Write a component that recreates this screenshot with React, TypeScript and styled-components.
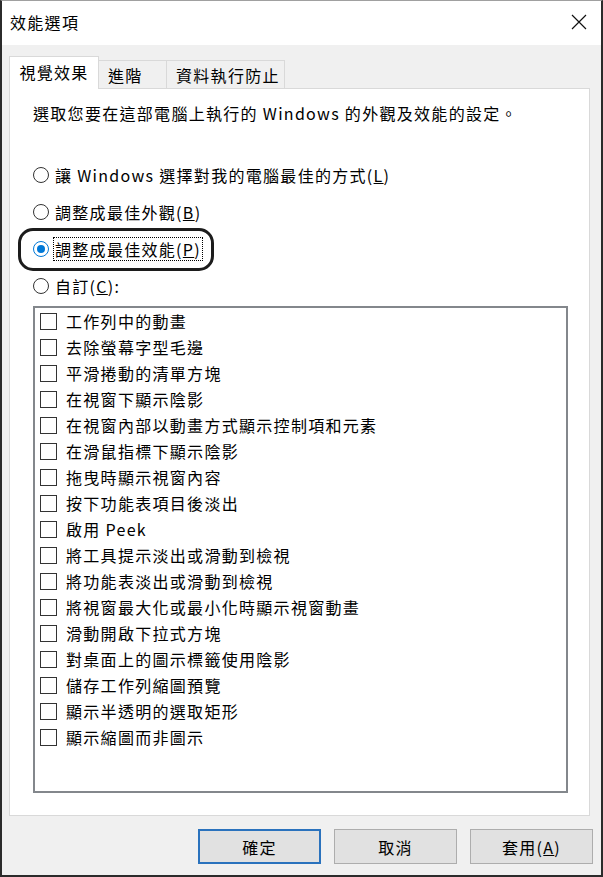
import React from "react";
import styled, { createGlobalStyle } from "styled-components";

const FONT = `"Noto Sans CJK TC", "Noto Sans CJK SC", "Noto Sans", sans-serif`;

const Global = createGlobalStyle`
  html, body { margin: 0; padding: 0; background: #ffffff; }
  body { font-family: ${FONT}; }
`;

const Window = styled.div`
  width: 603px;
  height: 877px;
  box-sizing: border-box;
  border: 2px solid #2b2b2b;
  border-top: 1px solid #a0a0a0;
  display: flex;
  flex-direction: column;
  background: #f0f0f0;
  font-family: ${FONT};
  font-size: 16px;
  letter-spacing: 1.3px;
  color: #000;
`;

const TitleBar = styled.div`
  height: 44px;
  flex: none;
  background: #ffffff;
  display: flex;
  align-items: center;
  justify-content: space-between;
  padding: 0 12px 0 8px;
`;

const Title = styled.span`
  font-size: 16px;
  line-height: 20px;
  margin-top: -2px;
`;

const CloseButton = styled.div`
  width: 20px;
  height: 20px;
  display: flex;
  align-items: center;
  justify-content: center;
  margin-top: -2px;
`;

const Body = styled.div`
  flex: 1;
  display: flex;
  flex-direction: column;
  padding: 11px 10px 11px 7px;
  min-height: 0;
`;

const TabStrip = styled.div`
  display: flex;
  align-items: flex-end;
  height: 33px;
  margin-bottom: -1px;
  position: relative;
  z-index: 1;
`;

const Tab = styled.div<{ $active?: boolean; $w: number }>`
  box-sizing: border-box;
  width: ${(p) => p.$w}px;
  height: ${(p) => (p.$active ? 33 : 29)}px;
  display: flex;
  align-items: center;
  justify-content: ${(p) => (p.$active ? "center" : "flex-start")};
  padding: ${(p) => (p.$active ? "0 0 2px 0" : "0 0 0 9px")};
  background: ${(p) => (p.$active ? "#ffffff" : "#f0f0f0")};
  border: 1px solid #d9d9d9;
  border-left: ${(p) => (p.$active ? "1px solid #d9d9d9" : "none")};
  border-bottom: ${(p) => (p.$active ? "none" : "1px solid #d9d9d9")};
  white-space: nowrap;
`;

const Panel = styled.div`
  flex: 1;
  background: #ffffff;
  border: 1px solid #d9d9d9;
  padding: 12px 21px 0 23px;
  display: flex;
  flex-direction: column;
  margin-right: 1px;
`;

const Description = styled.div`
  line-height: 24px;
  white-space: nowrap;
`;

const RadioGroup = styled.div`
  display: flex;
  flex-direction: column;
  margin-top: 31px;
`;

const RadioRow = styled.div<{ $ring?: boolean }>`
  height: 37px;
  display: flex;
  align-items: center;
  position: relative;
  ${(p) =>
    p.$ring
      ? `
    &::before {
      content: "";
      position: absolute;
      left: -15px;
      top: -2px;
      width: 196px;
      height: 43px;
      box-sizing: border-box;
      border: 3px solid #1c1c1c;
      border-radius: 15px;
      pointer-events: none;
    }
  `
      : ""}
`;

const RadioCircle = styled.span<{ $checked?: boolean }>`
  width: 16px;
  height: 16px;
  box-sizing: border-box;
  border-radius: 50%;
  border: 1px solid ${(p) => (p.$checked ? "#0078d7" : "#333333")};
  background: #ffffff;
  display: flex;
  align-items: center;
  justify-content: center;
  margin-right: 4px;
  flex: none;
  &::after {
    content: "";
    display: ${(p) => (p.$checked ? "block" : "none")};
    width: 8px;
    height: 8px;
    border-radius: 50%;
    background: #0078d7;
  }
`;

const RadioLabel = styled.span<{ $focus?: boolean }>`
  padding: 0 1px;
  line-height: 22px;
  border: 1px dotted ${(p) => (p.$focus ? "#000000" : "transparent")};
  white-space: nowrap;
`;

const ListBox = styled.div`
  margin-top: 2px;
  height: 487px;
  box-sizing: border-box;
  border: 2px solid #83878c;
  background: #ffffff;
  padding: 0 5px;
  display: flex;
  flex-direction: column;
`;

const CheckRow = styled.div`
  height: 26px;
  flex: none;
  display: flex;
  align-items: center;
  white-space: nowrap;
`;

const CheckBox = styled.span`
  width: 17px;
  height: 17px;
  box-sizing: border-box;
  border: 1px solid #333333;
  background: #ffffff;
  margin-right: 9px;
  flex: none;
`;

const ButtonRow = styled.div`
  display: flex;
  justify-content: flex-end;
  gap: 13px;
  margin-top: 13px;
  margin-right: -2px;
`;

const Button = styled.div<{ $default?: boolean }>`
  width: 123px;
  height: 35px;
  box-sizing: border-box;
  background: #e1e1e1;
  border: ${(p) => (p.$default ? "2px solid #2a72bd" : "1px solid #adadad")};
  display: flex;
  align-items: center;
  justify-content: center;
  line-height: 20px;
`;

const options = [
  "工作列中的動畫",
  "去除螢幕字型毛邊",
  "平滑捲動的清單方塊",
  "在視窗下顯示陰影",
  "在視窗內部以動畫方式顯示控制項和元素",
  "在滑鼠指標下顯示陰影",
  "拖曳時顯示視窗內容",
  "按下功能表項目後淡出",
  "啟用 Peek",
  "將工具提示淡出或滑動到檢視",
  "將功能表淡出或滑動到檢視",
  "將視窗最大化或最小化時顯示視窗動畫",
  "滑動開啟下拉式方塊",
  "對桌面上的圖示標籤使用陰影",
  "儲存工作列縮圖預覽",
  "顯示半透明的選取矩形",
  "顯示縮圖而非圖示",
];

export default function App() {
  return (
    <>
      <Global />
      <Window>
        <TitleBar>
          <Title>效能選項</Title>
          <CloseButton>
            <svg width="16" height="16" viewBox="0 0 16 16">
              <path d="M1 1 L15 15 M15 1 L1 15" stroke="#111" strokeWidth="1.2" fill="none" />
            </svg>
          </CloseButton>
        </TitleBar>
        <Body>
          <TabStrip>
            <Tab $active $w={90}>視覺效果</Tab>
            <Tab $w={68}>進階</Tab>
            <Tab $w={118}>資料執行防止</Tab>
          </TabStrip>
          <Panel>
            <Description>選取您要在這部電腦上執行的 Windows 的外觀及效能的設定。</Description>
            <RadioGroup>
              <RadioRow>
                <RadioCircle />
                <RadioLabel>
                  讓 Windows 選擇對我的電腦最佳的方式(<u>L</u>)
                </RadioLabel>
              </RadioRow>
              <RadioRow>
                <RadioCircle />
                <RadioLabel>
                  調整成最佳外觀(<u>B</u>)
                </RadioLabel>
              </RadioRow>
              <RadioRow $ring>
                <RadioCircle $checked />
                <RadioLabel $focus>
                  調整成最佳效能(<u>P</u>)
                </RadioLabel>
              </RadioRow>
              <RadioRow>
                <RadioCircle />
                <RadioLabel>
                  自訂(<u>C</u>):
                </RadioLabel>
              </RadioRow>
            </RadioGroup>
            <ListBox>
              {options.map((o) => (
                <CheckRow key={o}>
                  <CheckBox />
                  {o}
                </CheckRow>
              ))}
            </ListBox>
          </Panel>
          <ButtonRow>
            <Button $default>確定</Button>
            <Button>取消</Button>
            <Button>
              套用(<u>A</u>)
            </Button>
          </ButtonRow>
        </Body>
      </Window>
    </>
  );
}
